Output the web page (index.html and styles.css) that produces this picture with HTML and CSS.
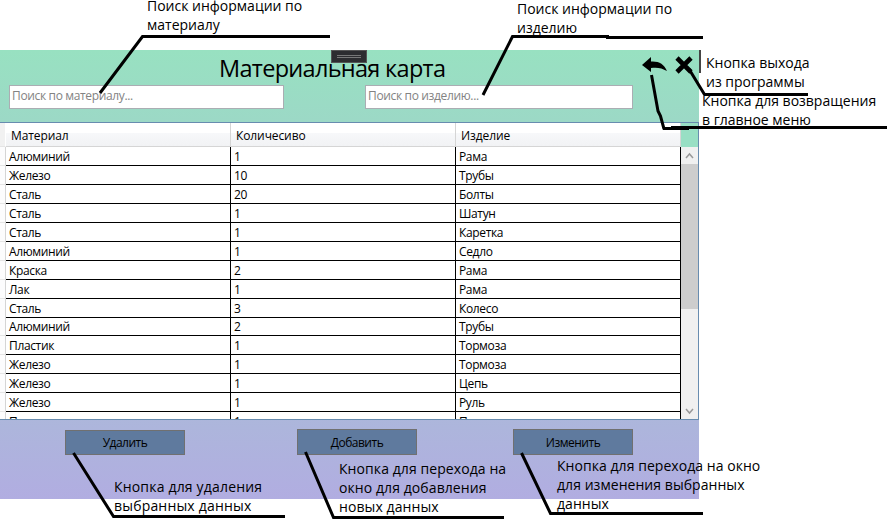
FILE: index.html
```
<!DOCTYPE html>
<html lang="ru">
<head>
<meta charset="utf-8">
<title>Материальная карта</title>
<link rel="stylesheet" href="styles.css">
</head>
<body>
<main class="window">
  <header class="top">
    <h1>Материальная карта</h1>
    <div class="fields">
      <input class="search material" placeholder="Поиск по материалу...">
      <input class="search product" placeholder="Поиск по изделию...">
    </div>
    <div class="handle"></div>
    <svg class="icons" width="58" height="22" viewBox="0 0 58 22">
      <path d="M0 10L9 2V6.500C17 6 22 9 25 16C20 13 15 12 9 13V17Z"/>
      <path d="M35 3L49 17M49 3L35 17" stroke="#000" stroke-width="4.600"/>
    </svg>
  </header>
  <section class="grid">
    <div class="data">
      <div class="row head"><i></i><span>Материал</span><span>Количесиво</span><span>Изделие</span></div>
      <div class="row"><i></i><span>Алюминий</span><span>1</span><span>Рама</span></div>
      <div class="row"><i></i><span>Железо</span><span>10</span><span>Трубы</span></div>
      <div class="row"><i></i><span>Сталь</span><span>20</span><span>Болты</span></div>
      <div class="row"><i></i><span>Сталь</span><span>1</span><span>Шатун</span></div>
      <div class="row"><i></i><span>Сталь</span><span>1</span><span>Каретка</span></div>
      <div class="row"><i></i><span>Алюминий</span><span>1</span><span>Седло</span></div>
      <div class="row"><i></i><span>Краска</span><span>2</span><span>Рама</span></div>
      <div class="row"><i></i><span>Лак</span><span>1</span><span>Рама</span></div>
      <div class="row"><i></i><span>Сталь</span><span>3</span><span>Колесо</span></div>
      <div class="row"><i></i><span>Алюминий</span><span>2</span><span>Трубы</span></div>
      <div class="row"><i></i><span>Пластик</span><span>1</span><span>Тормоза</span></div>
      <div class="row"><i></i><span>Железо</span><span>1</span><span>Тормоза</span></div>
      <div class="row"><i></i><span>Железо</span><span>1</span><span>Цепь</span></div>
      <div class="row"><i></i><span>Железо</span><span>1</span><span>Руль</span></div>
      <div class="row"><i></i><span>Пластик</span><span>1</span><span>Педали</span></div>
    </div>
    <div class="scroll">
      <svg width="17" height="17" viewBox="0 0 17 17"><path d="M5 11L8.500 7L12 11"/></svg>
      <div class="thumb"></div>
      <svg width="17" height="17" viewBox="0 0 17 17"><path d="M5 7L8.500 11L12 7"/></svg>
    </div>
  </section>
  <footer class="actions">
    <button class="remove">Удалить</button>
    <button class="add">Добавить</button>
    <button class="edit">Изменить</button>
  </footer>
</main>
<div class="edge"></div>
<p class="note n1">Поиск информации по<br>материалу</p>
<p class="note n2">Поиск информации по<br>изделию</p>
<p class="note n3">Кнопка выхода<br>из программы</p>
<p class="note n4">Кнопка для возвращения<br>в главное меню</p>
<p class="note n5">Кнопка для удаления<br>выбранных данных</p>
<p class="note n6">Кнопка для перехода на<br>окно для добавления<br>новых данных</p>
<p class="note n7">Кнопка для перехода на окно<br>для изменения выбранных<br>данных</p>
<svg class="lines" width="887" height="521" viewBox="0 0 887 521">
  <path d="M100 93L142.500 36.500H330"/>
  <path d="M483 95L512.500 36.500H607.500V37.500H703"/>
  <path d="M689 69L704.500 94.500H808"/>
  <path d="M651.500 75L658 111L660.500 116L664 129M663 128.500H689M671 127.500H887"/>
  <path d="M73.500 453L113.500 516.500H285"/>
  <path d="M305.500 452L333.500 517.500H504"/>
  <path d="M521.500 453L550.500 513.500H703"/>
</svg>
</body>
</html>
```
FILE: styles.css
```
* { box-sizing: border-box; }
body {
  margin: 0;
  padding-top: 50px;
  width: 887px;
  height: 521px;
  overflow: hidden;
  position: relative;
  background: #fff;
  color: #000;
  font: 12px/16px "Open Sans", "Noto Sans", sans-serif;
  letter-spacing: -0.350px;
}
.window {
  width: 699px;
  height: 449px;
  display: flex;
  flex-direction: column;
  background: linear-gradient(#98e1c1, #b1ade1);
}
.top { height: 72px; position: relative; }
h1 {
  margin: 0;
  padding: 2px 0 0 219px;
  height: 35px;
  font-size: 23.500px;
  line-height: 32px;
  font-weight: 400;
  letter-spacing: -0.700px;
  white-space: nowrap;
}
.fields { display: flex; padding-left: 9px; gap: 81px; }
.search {
  height: 24px;
  padding: 0 2px 3px;
  border: 1px solid #abadb3;
  border-radius: 0;
  background: #fff;
  font: inherit;
  letter-spacing: inherit;
}
.search::placeholder { color: #838383; opacity: 1; }
.material { width: 275px; }
.product { width: 268px; }
.handle {
  position: absolute;
  left: 331px;
  top: 0;
  width: 36px;
  height: 13px;
  border: 1px solid #555;
  background: linear-gradient(#777, #777) 5px 4px / 24px 1px no-repeat,
    linear-gradient(#777, #777) 5px 6px / 24px 1px no-repeat, #2d2d30;
}
.icons { position: absolute; left: 642px; top: 5px; }
.grid {
  height: 298px;
  display: flex;
  border: 1px solid #688caf;
  border-left: 0;
  overflow: hidden;
}
.data { width: 681px; height: 296px; overflow: hidden; background: #fff; }
.row {
  display: grid;
  grid-template-columns: 6px 225px 225px 225px;
  height: 18.950px;
}
.row i { border-right: 1px solid #d5d5d5; border-bottom: 1px solid #e5e5e5; background: #fcfcfd; }
.row span {
  padding: 2px 0 0 3px;
  border-right: 1px solid #000;
  border-bottom: 1px solid #000;
  line-height: 16px;
  white-space: nowrap;
}
.head { height: 24px; background: linear-gradient(#fff 40%, #f7f8fa 41%, #f1f2f4); }
.head i { background: #f1f1f1; border-right-color: #fff; }
.head span { padding: 5px 0 0 5px; border-color: #d5d5d5; letter-spacing: -0.100px; }
.scroll {
  width: 17px;
  height: 296px;
  border-top: 24px solid #98dfc4;
  display: flex;
  flex-direction: column;
  background: #f0f0f0;
}
.scroll svg { flex: none; fill: none; stroke: #999; stroke-width: 1.500; }
.thumb { height: 145px; margin-bottom: auto; background: #cdcdcd; }
.actions { display: flex; align-items: flex-start; padding-left: 65px; }
.actions button {
  width: 120px;
  height: 26px;
  margin-top: 9px;
  padding: 1px 0 0;
  border: 1px solid #707070;
  border-radius: 0;
  background: #5f7a9e;
  color: #000;
  font: inherit;
  letter-spacing: -0.500px;
}
.actions .remove { margin-top: 10px; height: 25px; padding: 0; }
.add { margin-left: 112px; }
.edit { margin-left: 96px; }
.edge { position: absolute; left: 699px; top: 50px; width: 2px; height: 23px; background: #444; }
.lines { position: absolute; left: 0; top: 0; fill: none; stroke: #000; stroke-width: 3; }
.note {
  position: absolute;
  margin: 0;
  font: 14px/19px "Open Sans", "Noto Sans", sans-serif;
  letter-spacing: 0;
  white-space: nowrap;
}
.n1 { left: 147px; top: -4px; }
.n2 { left: 517px; top: -1px; }
.n3 { left: 706px; top: 53px; }
.n4 { left: 702px; top: 91px; }
.n5 { left: 114px; top: 477px; letter-spacing: 0.180px; }
.n6 { left: 339px; top: 459px; letter-spacing: 0.080px; }
.n7 { left: 557px; top: 456px; letter-spacing: 0.050px; }
```
